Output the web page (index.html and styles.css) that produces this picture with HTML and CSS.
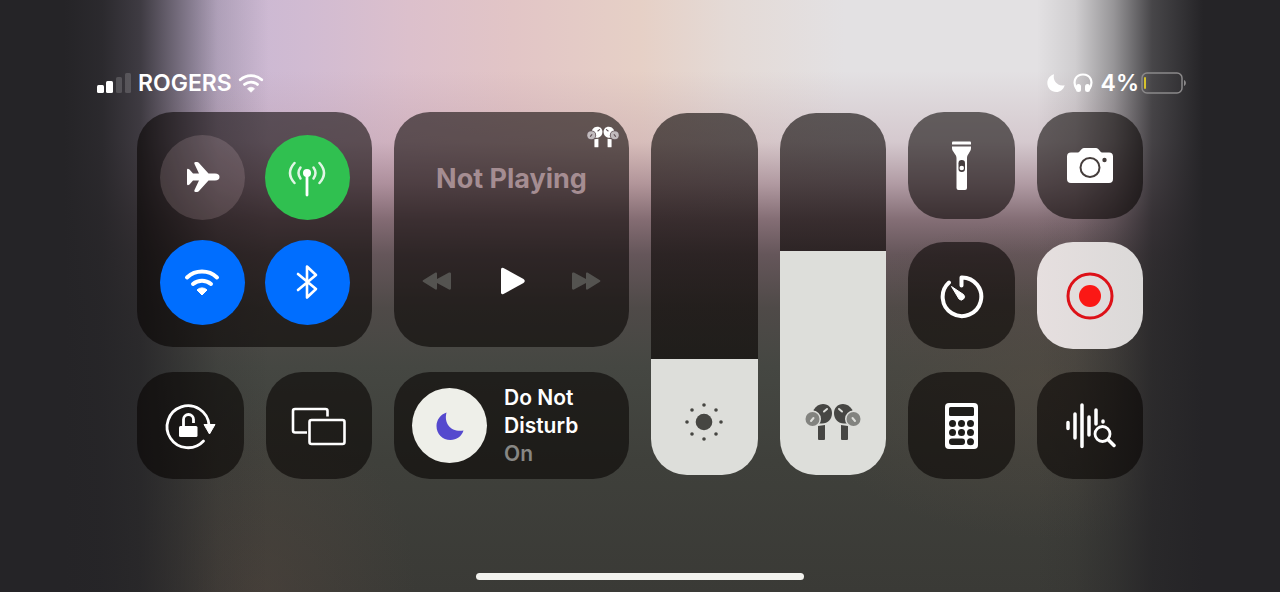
FILE: index.html
```html
<!DOCTYPE html>
<html lang="en">
<head>
  <meta charset="UTF-8">
  <meta name="viewport" content="width=device-width, initial-scale=1.0">
  <title>Control Center</title>
  <link rel="stylesheet" href="styles.css">
</head>
<body>
  <!-- shared icons -->
  <svg class="defs" aria-hidden="true">
    <symbol id="moon" viewBox="0 0 28 28">
      <path d="M10.500 .5C7.500 12 15.500 20.500 27.500 18.500C25.500 24.500 20.500 28 14.500 28C6.500 28 .5 22 .5 14C.5 8 4.500 2.500 10.500 .5Z" fill="currentColor"/>
    </symbol>
    <symbol id="wifi" viewBox="0 0 36 28">
      <g fill="none" stroke="currentColor" stroke-width="4" stroke-linecap="round">
        <path d="M3 9.500a22 22 0 0 1 30 0"/>
        <path d="M9 16a14 14 0 0 1 18 0"/>
      </g>
      <path d="M18 27l-5-5a7 7 0 0 1 10 0z" fill="currentColor" stroke="currentColor" stroke-linejoin="round"/>
    </symbol>
    <symbol id="airpods" viewBox="0 0 56 38">
      <g id="bud">
        <path d="M8.500 7C11 3 14 1 18 1C23.500 1 27 5 27 10C27 16 23 20.500 17 20.500H13Z" fill="currentColor"/>
        <path d="M19 8.500l3-2.500" stroke="var(--slot)" stroke-width="2" stroke-linecap="round"/>
        <circle cx="7.500" cy="16" r="8.500" fill="var(--slot)"/>
        <circle cx="7.500" cy="16" r="7" fill="currentColor" opacity=".6"/>
        <path d="M6 18l2.500-3" stroke="var(--slot)" stroke-width="2" stroke-linecap="round"/>
        <path d="M13 23q3.500-.3 7-1v14q0 1-1 1h-5q-1 0-1-1z" fill="currentColor"/>
      </g>
      <use href="#bud" transform="translate(56 0) scale(-1 1)"/>
    </symbol>
  </svg>

  <header class="status">
    <div class="status-left">
      <svg width="35" height="20" viewBox="0 0 35 20" role="img" aria-label="Signal">
        <rect x="0" y="12" width="7" height="8" rx="1.500" fill="#fff"/>
        <rect x="9" y="8" width="7" height="12" rx="1.500" fill="#fff"/>
        <rect x="19" y="4" width="6" height="16" rx="1.500" fill="#fff" opacity=".16"/>
        <rect x="28" y="0" width="6" height="20" rx="1.500" fill="#fff" opacity=".16"/>
      </svg>
      <span>ROGERS</span>
      <svg class="status-wifi" width="26" height="20" role="img" aria-label="Wi-Fi"><use href="#wifi"/></svg>
    </div>
    <div class="status-right">
      <svg width="18" height="18" viewBox="0 0 28 28" role="img" aria-label="Do Not Disturb">
        <path d="M11 .5C8 10 17 20.500 27.500 17.500C25.500 24.500 20.500 28 14.500 28C6.500 28 .5 22 .5 14C.5 8 4.500 2.500 11 .5Z" fill="#fff"/>
      </svg>
      <svg width="20" height="20" viewBox="0 0 20 20" role="img" aria-label="Headphones">
        <path d="M3.500 16C-1 8 3 1.500 10 1.500S21 8 16.500 16" fill="none" stroke="#fff" stroke-width="2.200"/>
        <rect x="3" y="11" width="5" height="8" rx="2.500" fill="#fff"/>
        <rect x="12" y="11" width="5" height="8" rx="2.500" fill="#fff"/>
      </svg>
      <span class="battery">4%
        <svg width="46" height="22" viewBox="0 0 46 22" aria-hidden="true">
          <rect x="1" y="1" width="40" height="20" rx="5" fill="none" stroke="#8b898a" stroke-width="1.500"/>
          <rect x="3" y="5" width="2" height="12" rx="1" fill="#d6c22c"/>
          <path d="M43 8c2.500 1 2.500 5 0 6z" fill="#8b898a"/>
        </svg>
      </span>
    </div>
  </header>

  <main class="controls">
    <section class="card connectivity">
      <button class="round" aria-label="Airplane Mode">
        <svg width="38" height="32" viewBox="0 0 38 32">
          <path d="M16 12.500L11.500 3C11 1.800 11.500 1 12.500 1H14C14.800 1 15.500 1.300 16 2L25.500 12.500H32C35 12.500 36.500 14 36.500 16S35 19.500 32 19.500H25.500L16 30C15.500 30.700 14.800 31 14 31H12.500C11.500 31 11 30.200 11.500 29L16 19.500H10L6.500 23.500Q4 25 4 23V9Q4 7 6.500 8.500L10 12.500Z" fill="#fff"/>
        </svg>
      </button>
      <button class="round green" aria-label="Cellular Data">
        <svg width="40" height="40" viewBox="0 0 40 40">
          <circle cx="20" cy="16" r="4" fill="#fff"/>
          <path d="M20 17V38" stroke="#fff" stroke-width="2.800" stroke-linecap="round"/>
          <g fill="none" stroke="#fff" stroke-width="2.500" stroke-linecap="round" opacity=".85">
            <path d="M13.500 10.500q-4 5.500 0 11M26.500 10.500q4 5.500 0 11"/>
            <path d="M7.500 6q-9 10 0 20M32.500 6q9 10 0 20"/>
          </g>
        </svg>
      </button>
      <button class="round blue" aria-label="Wi-Fi">
        <svg width="36" height="28"><use href="#wifi"/></svg>
      </button>
      <button class="round blue" aria-label="Bluetooth">
        <svg width="24" height="36" viewBox="0 0 24 36">
          <path d="M3 10L21 25L12 33.500V2.500L21 11L3 26" fill="none" stroke="#fff" stroke-width="2.600" stroke-linejoin="round" stroke-linecap="round"/>
        </svg>
      </button>
    </section>

    <section class="card media">
      <svg class="media-device" width="32" height="22" role="img" aria-label="AirPods Pro"><use href="#airpods"/></svg>
      <h2>Not Playing</h2>
      <div class="transport">
        <button aria-label="Previous" disabled>
          <svg width="30" height="20" viewBox="0 0 30 20"><path d="M1 9.200L13.500 1.500Q15 1 15 2.500V8L27 1.500Q29 1 29 2.500V17.500Q29 19 27 18.500L15 12V17.500Q15 19 13.500 18.500L1 10.800Q0 10 1 9.200Z" fill="#545350"/></svg>
        </button>
        <button aria-label="Play">
          <svg width="26" height="28" viewBox="0 0 26 28"><path d="M2 2.500Q2 0 4.500 1L24.500 12Q27 14 24.500 16L4.500 27Q2 28 2 25.500Z" fill="#fff"/></svg>
        </button>
        <button aria-label="Next" disabled>
          <svg width="30" height="20" viewBox="0 0 30 20"><path d="M29 9.200L16.500 1.500Q15 1 15 2.500V8L3 1.500Q1 1 1 2.500V17.500Q1 19 3 18.500L15 12V17.500Q15 19 16.500 18.500L29 10.800Q30 10 29 9.200Z" fill="#545350"/></svg>
        </button>
      </div>
    </section>

    <div class="slider">
      <input type="range" min="0" max="100" value="32" aria-label="Brightness" style="--level: 32%">
      <svg width="38" height="38" viewBox="0 0 38 38">
        <g fill="#464642">
          <circle cx="19" cy="19" r="8.300"/>
          <circle cx="19" cy="2" r="1.800"/><circle cx="31" cy="7" r="1.800"/>
          <circle cx="36" cy="19" r="1.800"/><circle cx="31" cy="31" r="1.800"/>
          <circle cx="19" cy="36" r="1.800"/><circle cx="7" cy="31" r="1.800"/>
          <circle cx="2" cy="19" r="1.800"/><circle cx="7" cy="7" r="1.800"/>
        </g>
      </svg>
    </div>

    <div class="slider">
      <input type="range" min="0" max="100" value="62" aria-label="Volume" style="--level: 62%">
      <svg class="pods" width="56" height="38"><use href="#airpods"/></svg>
    </div>

    <button class="card tile" aria-label="Flashlight">
      <svg width="22" height="50" viewBox="0 0 22 50">
        <path d="M2 1.500Q2 .5 3 .5H20Q21 .5 21 1.500V3.500H2Z" fill="#fff"/>
        <path d="M2 5.500H21V7C21 11 17 13 17 17V47Q17 49 15 49H8.500Q6.500 49 6.500 47V17C6.500 13 2 11 2 7Z" fill="#fff"/>
        <rect x="8.500" y="19" width="6.500" height="12" rx="3.200" fill="#453d3e"/>
        <circle cx="11.750" cy="27" r="2.300" fill="#fff"/>
      </svg>
    </button>
    <button class="card tile" aria-label="Camera">
      <svg width="48" height="38" viewBox="0 0 48 38">
        <path d="M6 5.500H12C14 5.500 15 1 18 1H30C33 1 34 5.500 36 5.500H43Q47 5.500 47 9.500V32Q47 36 43 36H5Q1 36 1 32V9.500Q1 5.500 5 5.500Z" fill="#fff"/>
        <circle cx="24" cy="20.500" r="9.500" fill="none" stroke="#453d3b" stroke-width="2"/>
        <circle cx="38.500" cy="13" r="2.200" fill="#453d3b"/>
      </svg>
    </button>
    <button class="card tile" aria-label="Timer">
      <svg width="46" height="46" viewBox="0 0 46 46">
        <path d="M23.500 12.500V4.500A19.300 19.300 0 1 1 11 9.500" fill="none" stroke="#fff" stroke-width="4" stroke-linecap="round" stroke-linejoin="round"/>
        <path d="M13.500 13.500L25.500 21.500A3 3 0 1 1 21 26Z" fill="#fff" stroke="#fff" stroke-linejoin="round"/>
      </svg>
    </button>
    <button class="card tile on" aria-label="Screen Recording" aria-pressed="true">
      <svg width="48" height="48" viewBox="0 0 48 48">
        <circle cx="24" cy="24" r="22" fill="none" stroke="#dd1118" stroke-width="3"/>
        <circle cx="24" cy="24" r="11" fill="#fb1815"/>
      </svg>
    </button>

    <button class="card tile" aria-label="Rotation Lock">
      <svg width="54" height="54" viewBox="0 0 54 54">
        <path d="M46 26A21 21 0 1 0 40.500 42" fill="none" stroke="#fff" stroke-width="2.800" stroke-linecap="round"/>
        <path d="M41 25.500H52L46.500 35Z" fill="#fff" stroke="#fff" stroke-linejoin="round"/>
        <rect x="16" y="27" width="18.500" height="11" rx="1.500" fill="#fff"/>
        <path d="M20.500 28V20.500A5 5 0 0 1 30.500 20.500V24" fill="none" stroke="#fff" stroke-width="2.800"/>
      </svg>
    </button>
    <button class="card tile" aria-label="Screen Mirroring">
      <svg width="56" height="40" viewBox="0 0 56 40" fill="none" stroke="#fff" stroke-width="2.600" stroke-linejoin="round">
        <path d="M16 26.500H4Q2 26.500 2 24.500V5Q2 3 4 3H34.500Q36.500 3 36.500 5V10.500"/>
        <rect x="18.500" y="14" width="35" height="24" rx="2"/>
      </svg>
    </button>
    <button class="card dnd" aria-pressed="true">
      <span class="dnd-icon"><svg width="28" height="28"><use href="#moon"/></svg></span>
      <span class="dnd-text">Do Not<br>Disturb<br><span class="dnd-state">On</span></span>
    </button>
    <button class="card tile" aria-label="Calculator">
      <svg width="34" height="48" viewBox="0 0 34 48">
        <rect x="1" y="1" width="33" height="46" rx="4" fill="#fff"/>
        <g fill="#1f1e1b">
          <rect x="5" y="5" width="25" height="9" rx="1.500"/>
          <circle cx="8.500" cy="21.500" r="3.500"/><circle cx="17.500" cy="21.500" r="3.500"/><circle cx="26.500" cy="21.500" r="3.500"/>
          <circle cx="8.500" cy="30.500" r="3.500"/><circle cx="17.500" cy="30.500" r="3.500"/><circle cx="26.500" cy="30.500" r="3.500"/>
          <rect x="5" y="36.500" width="16" height="6.500" rx="3"/><circle cx="26.500" cy="39.800" r="3.500"/>
        </g>
      </svg>
    </button>
    <button class="card tile" aria-label="Music Recognition">
      <svg width="52" height="48" viewBox="0 0 52 48" fill="none" stroke="#fff" stroke-width="3.500" stroke-linecap="round">
        <path d="M4 20.500V26.500M11 12V36M18 3V44.500M25 15V33M32 8V22M39 19V20"/>
        <circle cx="38.500" cy="32" r="7.500" stroke-width="2.800"/>
        <path d="M44.500 38L50 43.500"/>
      </svg>
    </button>
  </main>

  <div class="home-bar"></div>
</body>
</html>
```
FILE: styles.css
```css
* {
  box-sizing: border-box;
}

body {
  margin: 0;
  min-height: 100vh;
  display: flex;
  flex-direction: column;
  padding: 69px 0 12px;
  font-family: Inter, "Liberation Sans", sans-serif;
  font-weight: 600;
  color: #fff;
  /* dark sides, then the fade to the bottom, then the colours at the top */
  background:
    linear-gradient(90deg, #252427 5%, rgba(37, 36, 39, 0.96) 8%, rgba(37, 36, 39, 0.84) 11%, rgba(37, 36, 39, 0.5) 14%, rgba(37, 36, 39, 0.16) 17%, rgba(37, 36, 39, 0) 21%, rgba(37, 36, 39, 0) 81%, rgba(37, 36, 39, 0.1) 84%, rgba(37, 36, 39, 0.4) 87%, rgba(37, 36, 39, 0.82) 90%, #252427 94%),
    radial-gradient(ellipse 160px 200px at 20% 100%, rgba(84, 70, 62, 0.45), transparent),
    radial-gradient(ellipse 260px 160px at 82% 64%, rgba(88, 76, 66, 0.5), transparent),
    linear-gradient(180deg, rgba(190, 150, 165, 0) 12%, rgba(180, 145, 158, 0.3) 24%, rgba(150, 118, 130, 0.65) 31%, rgba(122, 98, 106, 0.9) 37%, #65565a 43%, #4f4a48 52%, #454742 62%, #3f403b 78%, #3a3a36 100%),
    linear-gradient(90deg, #c6b6d4 15%, #d1bbd2 24%, #dcc0cc 32%, #e2c5c6 40%, #e6d0c6 50%, #e4dad6 57%, #e3e1e3 66%, #e3e1e3 100%);
}

button {
  margin: 0;
  padding: 0;
  border: none;
  background: none;
  font: inherit;
  color: inherit;
}

svg {
  display: block;
}

.defs {
  position: absolute;
  width: 0;
  height: 0;
}

/* Status bar */
.status {
  display: flex;
  justify-content: space-between;
  height: 28px;
  margin-bottom: 15px;
  padding: 0 93px 0 97px;
  font-size: 23px;
  line-height: 28px;
}

.status-left,
.status-right,
.battery {
  display: flex;
  align-items: center;
}

.status-left {
  gap: 6px;
}

.status-right {
  gap: 8px;
}

.battery {
  gap: 2px;
}

/* Grid of controls */
.controls {
  display: grid;
  grid-template-columns: repeat(8, 1fr);
  grid-template-rows: repeat(3, 107px);
  gap: 23px 22px;
  padding: 0 137px;
}

.card {
  border-radius: 36px;
  background: rgba(6, 2, 0, 0.57);
}

.connectivity,
.media {
  grid-column: span 2;
  grid-row: span 2;
  align-self: start;
  height: 235px;
}

.connectivity {
  display: grid;
  grid-template-columns: 85px 85px;
  gap: 20px;
  place-content: center;
}

.round {
  display: grid;
  place-items: center;
  height: 85px;
  border-radius: 50%;
  background: rgba(255, 220, 225, 0.15);
}

.green {
  background: #30c050;
}

.blue {
  background: #006eff;
}

.media {
  display: flex;
  flex-direction: column;
  padding-top: 14px;
}

.media-device {
  --slot: #64545a;
  align-self: flex-end;
  margin-right: 10px;
}

.media h2 {
  margin: 14px 0 64px;
  font-size: 27px;
  line-height: 34px;
  font-weight: 700;
  text-align: center;
  color: #a58d92;
}

.transport {
  display: flex;
  justify-content: space-between;
  align-items: center;
  height: 42px;
  padding: 0 28px;
}

.slider {
  position: relative;
  grid-row: span 3;
  height: 362px;
  margin-top: 1px;
  border-radius: 36px;
  overflow: hidden;
}

.slider input {
  appearance: none;
  writing-mode: vertical-lr;
  direction: rtl;
  display: block;
  width: 100%;
  height: 100%;
  margin: 0;
  background: linear-gradient(to top, #dddeda var(--level), rgba(6, 2, 0, 0.6) var(--level));
}

.slider input::-webkit-slider-thumb {
  appearance: none;
  width: 100%;
  height: 1px;
  background: transparent;
}

/* icon lies over the track */
.slider svg {
  position: absolute;
  bottom: 34px;
  left: 50%;
  transform: translateX(-50%);
  pointer-events: none;
}

.pods {
  --slot: #dddeda;
  color: #464643;
}

.tile {
  display: grid;
  place-items: center;
}

.on {
  background: linear-gradient(90deg, #e6dfdf, #dbd9d8);
}

.dnd {
  grid-column: span 2;
  display: flex;
  align-items: center;
  gap: 17px;
  padding-left: 18px;
  text-align: left;
  font-size: 21px;
  line-height: 28px;
}

.dnd-icon {
  display: grid;
  place-items: center;
  width: 75px;
  height: 75px;
  border-radius: 50%;
  background: #eeefe9;
  color: #5549ce;
}

.dnd-state {
  color: #878784;
}

.home-bar {
  width: 328px;
  height: 7px;
  margin: auto auto 0;
  border-radius: 4px;
  background: #f2f2ee;
}
```
